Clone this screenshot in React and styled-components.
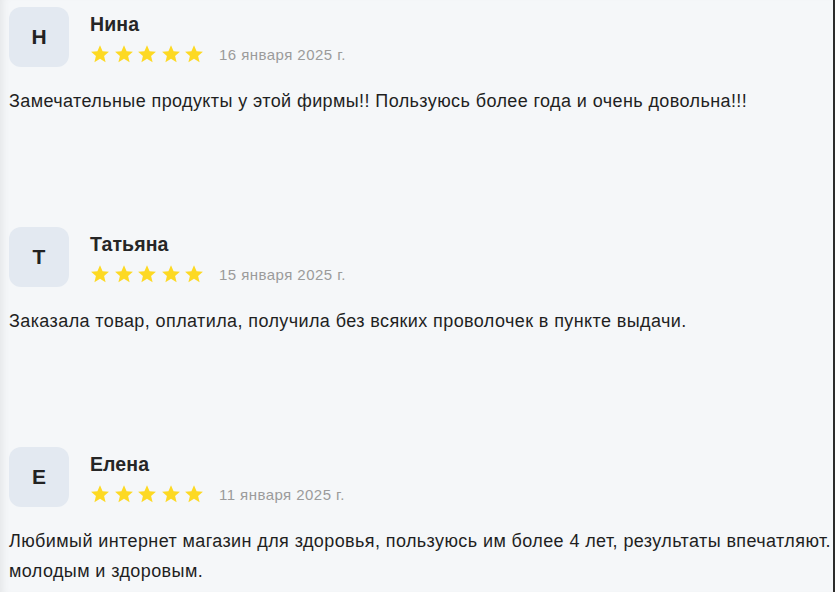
import React from "react";
import styled, { createGlobalStyle } from "styled-components";

const GlobalStyle = createGlobalStyle`
  html, body {
    margin: 0;
    padding: 0;
    background: #f5f7f9;
    overflow: hidden;
  }
  body {
    font-family: "Liberation Sans", Arial, sans-serif;
    color: #222;
  }
`;

const reviews = [
  {
    name: "Нина",
    date: "16 января 2025 г.",
    text: "Замечательные продукты у этой фирмы!! Пользуюсь более года и очень довольна!!!",
  },
  {
    name: "Татьяна",
    date: "15 января 2025 г.",
    text: "Заказала товар, оплатила, получила без всяких проволочек в пункте выдачи.",
  },
  {
    name: "Елена",
    date: "11 января 2025 г.",
    text: "Любимый интернет магазин для здоровья, пользуюсь им более 4 лет, результаты впечатляют. молодым и здоровым.",
  },
];

const Page = styled.div`
  position: relative;
  width: 835px;
  height: 592px;
  box-sizing: border-box;
  padding: 7px 0 0 9px;
  overflow: hidden;
  box-shadow: inset 8px 0 8px -6px rgba(0, 0, 0, 0.08);
  border-right: 2px solid #2c2c2c;
`;

const List = styled.div`
  width: 880px;
  display: flex;
  flex-direction: column;
`;

const Card = styled.div`
  display: flex;
  flex-direction: column;
  height: 220px;
`;

const Header = styled.div`
  display: flex;
  align-items: flex-start;
  gap: 21px;
`;

const Avatar = styled.div`
  width: 60px;
  height: 60px;
  flex-shrink: 0;
  border-radius: 12px;
  background: #e3e9f1;
  display: flex;
  align-items: center;
  justify-content: center;
  font-size: 21px;
  font-weight: 700;
  color: #222;
`;

const Info = styled.div`
  display: flex;
  flex-direction: column;
  padding-top: 5px;
  gap: 8px;
`;

const Name = styled.div`
  font-size: 19.5px;
  line-height: 24px;
  font-weight: 700;
  letter-spacing: 0.1px;
  color: #262626;
`;

const Meta = styled.div`
  display: flex;
  align-items: center;
  height: 20px;
  gap: 15px;
`;

const Stars = styled.div`
  display: flex;
  gap: 3.5px;
`;

const DateText = styled.span`
  font-size: 15px;
  letter-spacing: 0.45px;
  color: #9b9b9b;
`;

const Text = styled.p`
  margin: 19px 0 0;
  font-size: 18px;
  line-height: 30px;
  letter-spacing: 0.4px;
  color: #1f1f1f;
`;

const Star = () => (
  <svg width="20" height="20" viewBox="0 0 24 24">
    <path
      fill="#fdd923"
      d="M12 1.6l3.1 7 7.6.7-5.8 5 1.8 7.5L12 17.8l-6.7 4 1.8-7.5-5.8-5 7.6-.7z"
    />
  </svg>
);

export default function App() {
  return (
    <>
      <GlobalStyle />
      <Page>
        <List>
          {reviews.map((r) => (
            <Card key={r.name}>
              <Header>
                <Avatar>{r.name[0]}</Avatar>
                <Info>
                  <Name>{r.name}</Name>
                  <Meta>
                    <Stars>
                      {[0, 1, 2, 3, 4].map((i) => (
                        <Star key={i} />
                      ))}
                    </Stars>
                    <DateText>{r.date}</DateText>
                  </Meta>
                </Info>
              </Header>
              <Text>{r.text}</Text>
            </Card>
          ))}
        </List>
      </Page>
    </>
  );
}
